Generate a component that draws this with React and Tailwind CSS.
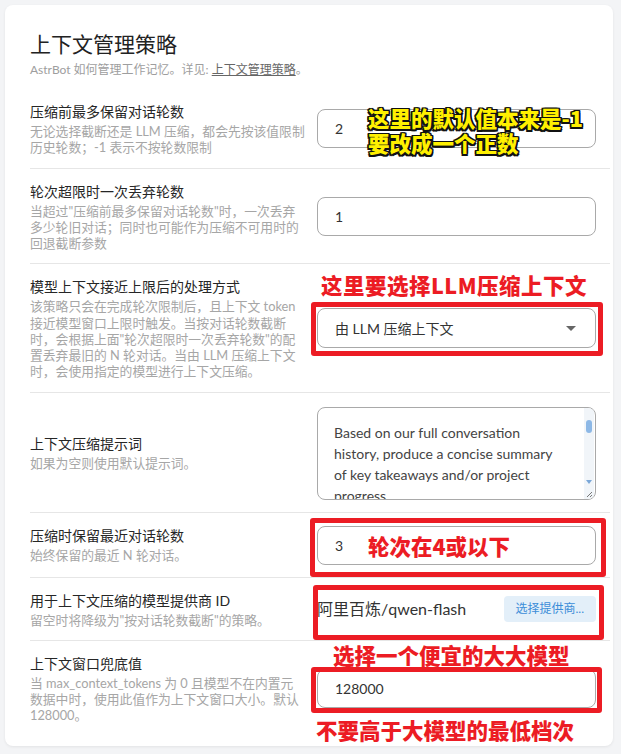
const FONT = "font-['Lato','Noto_Sans_CJK_SC',sans-serif]";
const NOTE = "font-['Noto_Sans_CJK_SC',sans-serif] font-black text-[21.5px] leading-[26px] text-[#ec1c24] whitespace-nowrap";

function Row({ label, desc, children, last, className = 'pt-[13px] pb-[12px]' }) {
  return (
    <div className={`flex items-center ${className} ${last ? '' : 'border-b border-[#e6e6e6]'}`}>
      <div className="w-[287px] shrink-0 pr-[20px]">
        <div className="text-[14px] leading-[20px] text-[#262626]">{label}</div>
        <div className="mt-[1px] text-[12.8px] leading-[16.25px] text-[#a6a6a6]">
          {desc.map((line, i) => (
            <div key={i} className="whitespace-nowrap">{line}</div>
          ))}
        </div>
      </div>
      <div className="w-[279px] shrink-0">{children}</div>
    </div>
  );
}

function Field({ value }) {
  return (
    <div className="h-[39px] rounded-lg border border-[#a9a9a9] flex items-center pl-[17px] text-[14px] text-[#333]">
      {value}
    </div>
  );
}

function RedBox({ className }) {
  return <div className={`absolute border-[5px] border-[#ec1c24] rounded-[3px] ${className}`} />;
}

export default function App() {
  return (
    <div className={`min-h-screen bg-[#f3f4f6] pt-[5px] pb-[9px] ${FONT}`}>
      <div className="relative ml-[5px] w-[608px] bg-white rounded-lg shadow-[0_1px_3px_rgba(0,0,0,0.07)] pb-[10px]">
        {/* header */}
        <div className="pl-[25px] pt-[25px]">
          <h1 className="text-[21px] leading-[28px] text-[#222]">上下文管理策略</h1>
          <p className="mt-[4px] text-[12px] leading-[16px] text-[#9e9e9e]">
            AstrBot 如何管理工作记忆。详见: <span className="underline text-[#666]">上下文管理策略</span>。
          </p>
        </div>

        <div className="mt-[11px] ml-[25px] mr-[3px]">
          <Row
            label="压缩前最多保留对话轮数"
            desc={['无论选择截断还是 LLM 压缩，都会先按该值限制', '历史轮数；-1 表示不按轮数限制']}
          >
            <Field value="2" />
          </Row>

          <Row
            label="轮次超限时一次丢弃轮数"
            desc={['当超过"压缩前最多保留对话轮数"时，一次丢弃', '多少轮旧对话；同时也可能作为压缩不可用时的', '回退截断参数']}
          >
            <Field value="1" />
          </Row>

          <Row
            label="模型上下文接近上限后的处理方式"
            desc={[
              '该策略只会在完成轮次限制后，且上下文 token',
              '接近模型窗口上限时触发。当按对话轮数截断',
              '时，会根据上面"轮次超限时一次丢弃轮数"的配',
              '置丢弃最旧的 N 轮对话。当由 LLM 压缩上下文',
              '时，会使用指定的模型进行上下文压缩。',
            ]}
          >
            <div className="h-[40px] rounded-lg border border-[#a9a9a9] flex items-center justify-between pl-[17px] pr-[19px] text-[14px] text-[#333]">
              <span>由 LLM 压缩上下文</span>
              <svg width="10" height="5" viewBox="0 0 10 5">
                <path d="M0 0h10L5 5z" fill="#666" />
              </svg>
            </div>
          </Row>

          <Row label="上下文压缩提示词" desc={['如果为空则使用默认提示词。']} className="pt-[14px] pb-[12px]">
            <div className="h-[93px] rounded-lg border border-[#a9a9a9] flex overflow-hidden">
              <div className="flex-1 pl-[16px] pt-[14px] text-[14px] leading-[21px] text-[#444] overflow-hidden">
                <div className="whitespace-nowrap">Based on our full conversation</div>
                <div className="whitespace-nowrap">history, produce a concise summary</div>
                <div className="whitespace-nowrap">of key takeaways and/or project</div>
                <div className="whitespace-nowrap">progress.</div>
              </div>
              <div className="w-[10px] mr-[1px] flex flex-col items-center bg-[#f1f5f9] pt-[12px] pb-[1px]">
                <div className="w-[6px] h-[13px] rounded-full bg-[#8db8e6]" />
                <div className="flex-1" />
                <svg width="6" height="4" viewBox="0 0 6 4" className="mb-[6px]">
                  <path d="M0 0h6L3 4z" fill="#7aa7d8" />
                </svg>
                <svg width="8" height="8" viewBox="0 0 8 8">
                  <path d="M7 2L2 7M7 5L5 7" stroke="#777" strokeWidth="1" />
                </svg>
              </div>
            </div>
          </Row>

          <Row label="压缩时保留最近对话轮数" desc={['始终保留的最近 N 轮对话。']}>
            <Field value="3" />
          </Row>

          <Row label="用于上下文压缩的模型提供商 ID" desc={['留空时将降级为"按对话轮数截断"的策略。']}>
            <div className="flex items-center justify-between">
              <span className="text-[16px] text-[#333]">阿里百炼/qwen-flash</span>
              <button className="h-[26px] px-[12px] rounded bg-[#e3eff9] text-[12px] text-[#3b8dd8]">
                选择提供商...
              </button>
            </div>
          </Row>

          <Row
            last
            label="上下文窗口兜底值"
            desc={['当 max_context_tokens 为 0 且模型不在内置元', '数据中时，使用此值作为上下文窗口大小。默认', '128000。']}
          >
            <Field value="128000" />
          </Row>
        </div>

        {/* annotations */}
        <div className="absolute left-[363px] top-[100px] font-['Noto_Sans_CJK_SC',sans-serif] font-black text-[21.5px] leading-[25px] text-[#fff000] whitespace-nowrap [text-shadow:-1.5px_-1.5px_0_#111,1.5px_-1.5px_0_#111,-1.5px_1.5px_0_#111,1.5px_1.5px_0_#111,0_-1.5px_0_#111,0_1.5px_0_#111,-1.5px_0_0_#111,1.5px_0_0_#111]">
          <div>这里的默认值本来是-1</div>
          <div>要改成一个正数</div>
        </div>

        <div className={`absolute left-[316px] top-[267px] tracking-[0.5px] ${NOTE}`}>这里要选择LLM压缩上下文</div>
        <RedBox className="left-[306px] top-[297px] w-[292px] h-[54px]" />

        <div className={`absolute left-[363px] top-[528px] ${NOTE}`}>轮次在4或以下</div>
        <RedBox className="left-[305px] top-[513px] w-[296px] h-[59px]" />

        <RedBox className="left-[308px] top-[580px] w-[291px] h-[55px]" />

        <div className={`absolute left-[328px] top-[637px] ${NOTE}`}>选择一个便宜的大大模型</div>
        <RedBox className="left-[306px] top-[662px] w-[291px] h-[46px]" />

        <div className={`absolute left-[311px] top-[712px] ${NOTE}`}>不要高于大模型的最低档次</div>
      </div>
    </div>
  );
}
